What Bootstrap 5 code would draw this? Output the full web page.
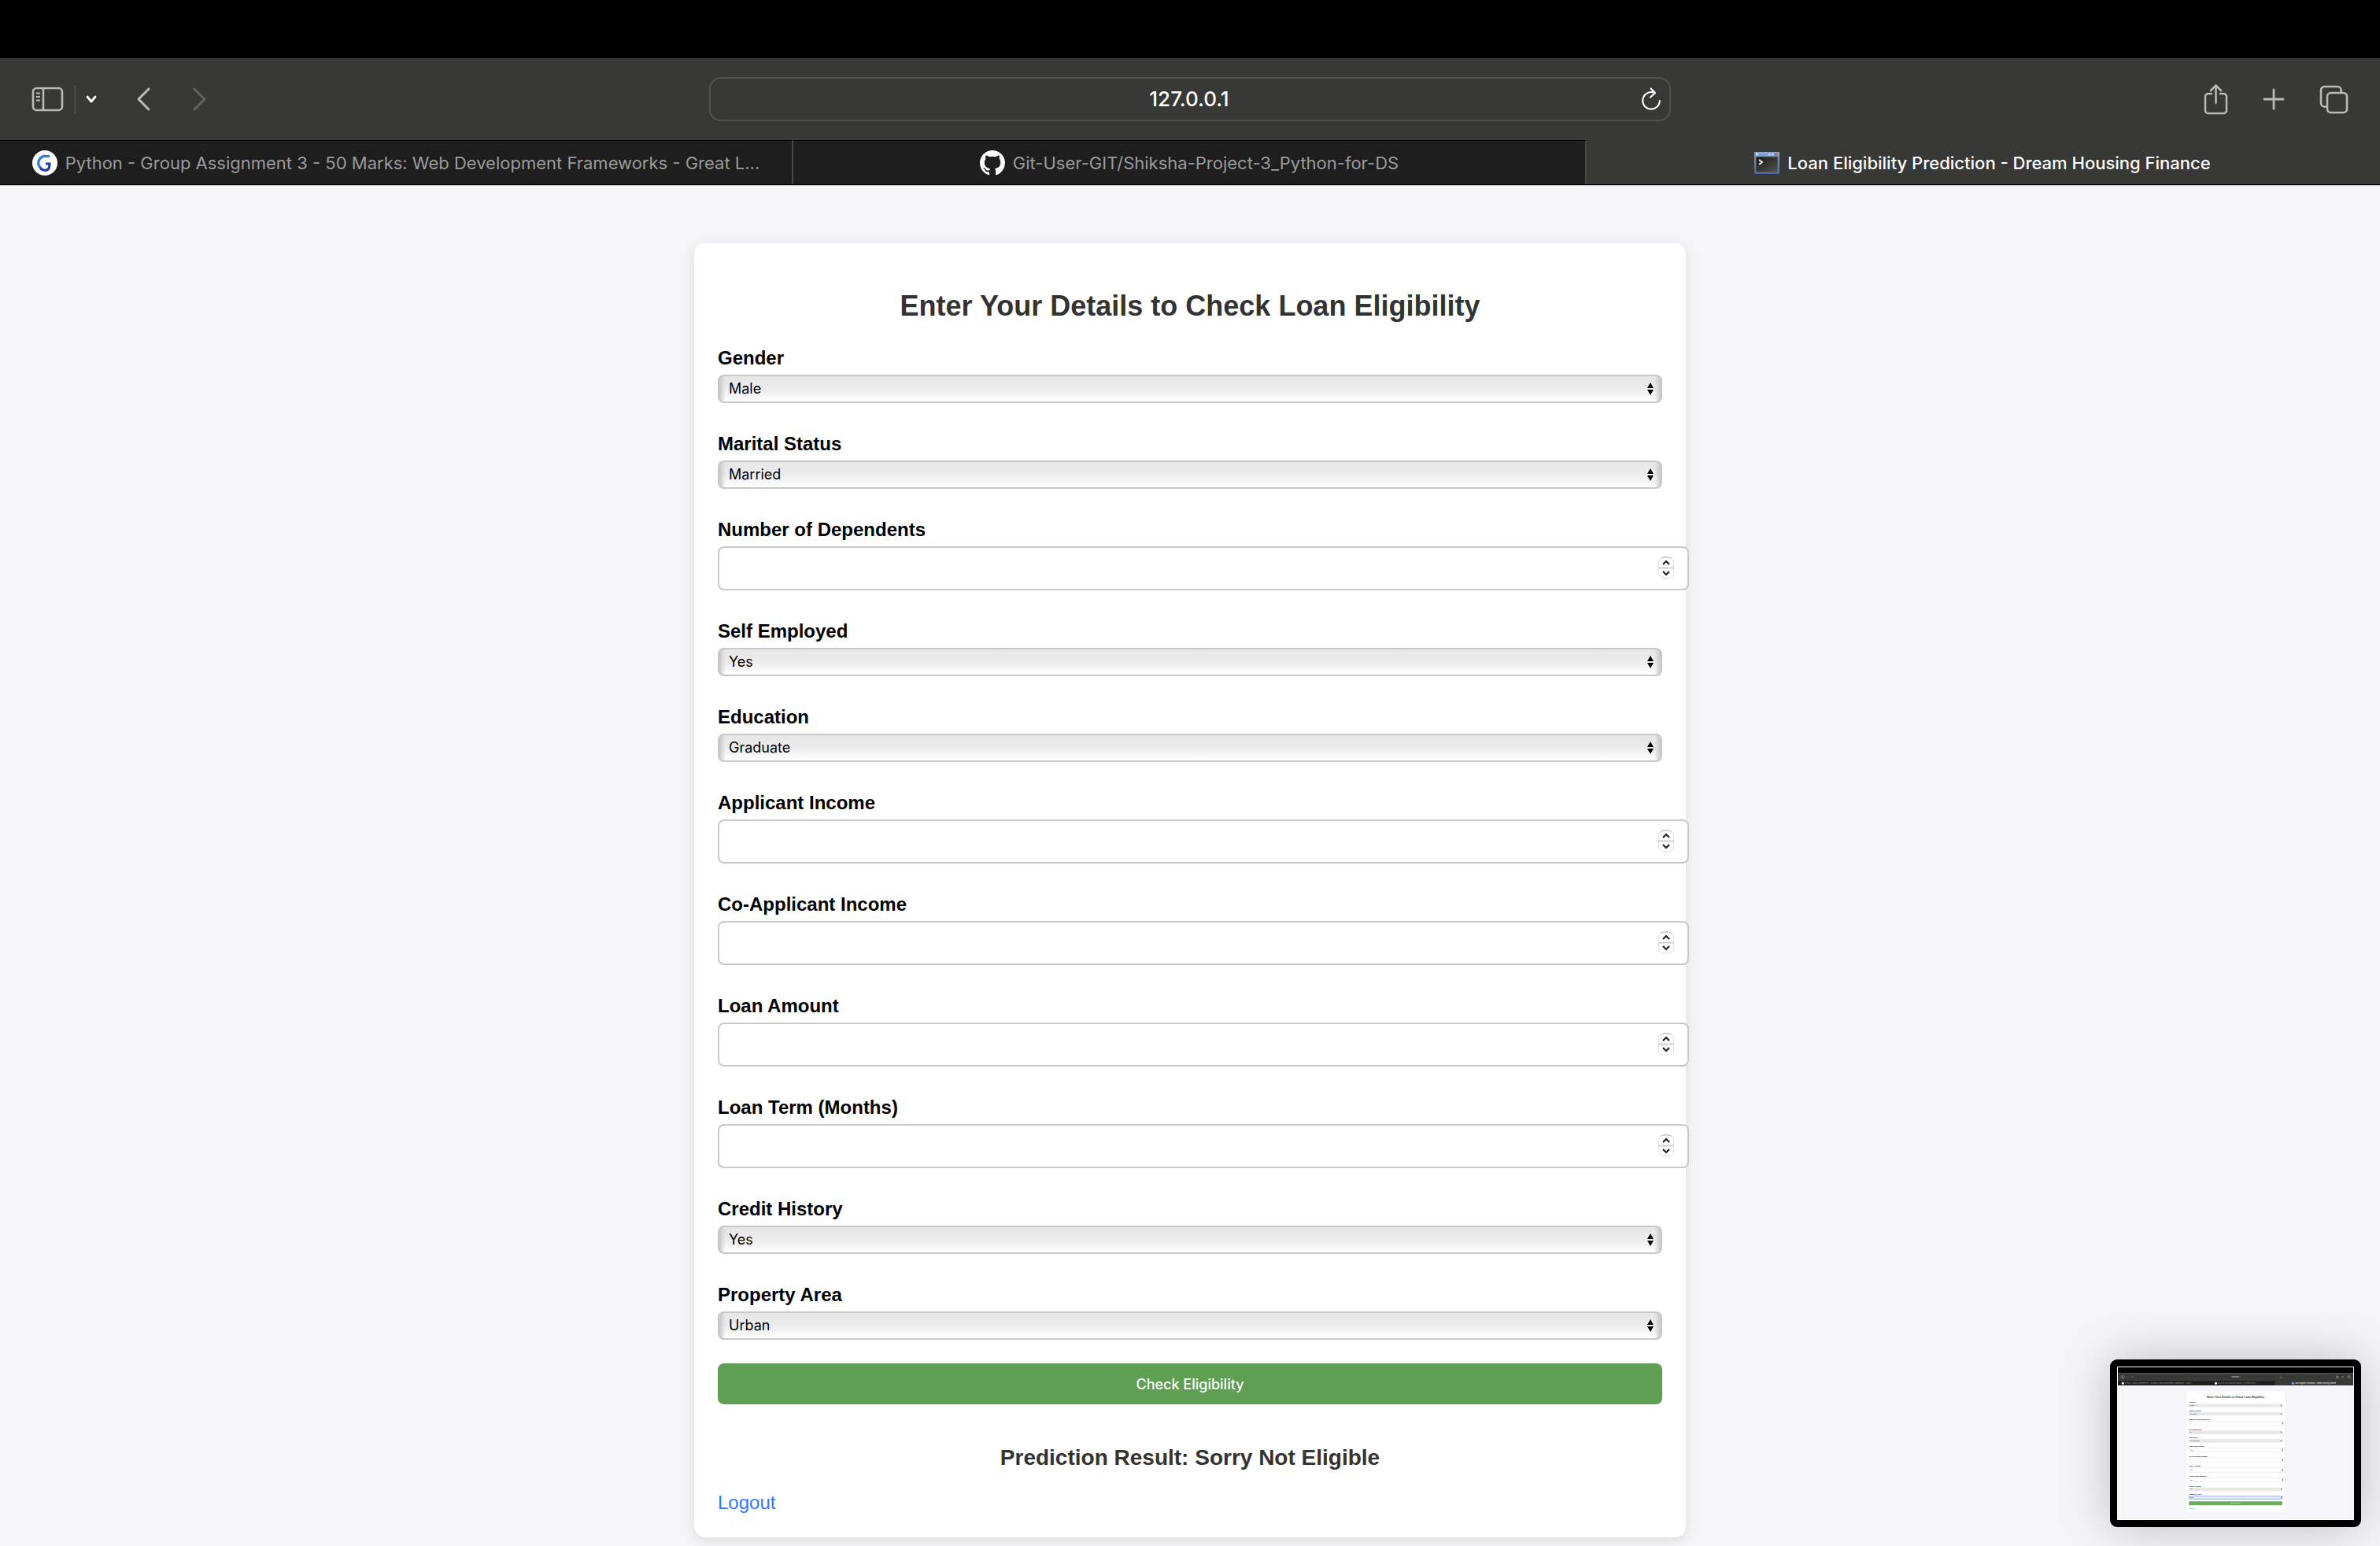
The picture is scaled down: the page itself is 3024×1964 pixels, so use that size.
<!DOCTYPE html>
<html lang="en">
<head>
<meta charset="utf-8">
<meta name="viewport" content="width=device-width, initial-scale=1">
<title>Loan Eligibility Prediction - Dream Housing Finance</title>
<link href="https://cdn.jsdelivr.net/npm/bootstrap@5.3.0/dist/css/bootstrap.min.css" rel="stylesheet">
<style>
  body { background: #f4f4f9; color: #000; font-family: "Liberation Sans", Arial, sans-serif; font-size: 24px; line-height: 28px; }

  /* Browser frame */
  .menu-strip { height: 74px; background: #000; }
  .browser-frame { background: #383836; font-family: Inter, sans-serif; }
  .tool-row { height: 104px; padding: 0 40px; }
  .tool-side { flex: 1 1 0; }
  .tool-btn { padding: 0; border: 0; background: none; color: #b9b9b7; display: flex; }
  .tool-btn:disabled { color: #62625f; }
  .tool-split { width: 2px; height: 36px; background: #4a4a48; margin: 0 13px; }
  .new-tab-btn { margin: 0 44px; }
  .address-box { width: 42%; max-width: 1222px; height: 56px; border: 2px solid #50504e; border-radius: 15px; padding: 0 10px 0 34px; }
  .address-box input { flex: 1; min-width: 0; background: none; border: 0; color: #fff; font-size: 26px; line-height: 32px; font-weight: 500; text-align: center; padding: 0; }
  .tab-row { border-bottom: 1px solid #000; box-shadow: 0 1px 0 #c4c4c6; }
  .page-tab { flex: 1; height: 56px; gap: 10px; border-top: 1px solid #000; border-right: 2px solid #474745; background: #1e1e1e; color: #9b9b9b; font-size: 22px; line-height: 28px; text-decoration: none; white-space: nowrap; overflow: hidden; }
  .page-tab.current { background: #383836; border-color: #383836; color: #fff; font-weight: 500; }
  .page-tab svg { flex: none; }

  /* Form card */
  .form-area { padding: 74px 0 11px; }
  .loan-card { width: 1260px; max-width: 100%; padding: 30px; border-radius: 14px; background: #fff; box-shadow: 0 4px 16px rgba(0, 0, 0, .1); }
  .loan-title { font-size: 36px; line-height: 42px; font-weight: 700; color: #333; margin: 29px 0 23px; }
  .field-block { margin-bottom: 30px; }
  .field-block label { display: block; font-weight: 700; line-height: 28px; padding: 8px 0 7px; }
  .loan-select { display: block; width: 100%; height: 36px; appearance: none; padding: 0 30px 0 12px; border: 2px solid #c8c8c8; border-radius: 8px; color: #000; font: 18px/30px Inter, sans-serif;
    background:
      url("data:image/svg+xml,%3Csvg xmlns='http://www.w3.org/2000/svg' viewBox='0 0 8 16'%3E%3Cpath d='M4 0 8 7H0zM4 16 0 9h8z'/%3E%3C/svg%3E") right 9px center / 8px 16px no-repeat,
      linear-gradient(90deg, #c8c8c8, rgba(220, 220, 220, 0) 8px, rgba(220, 220, 220, 0) calc(100% - 8px), #c8c8c8),
      linear-gradient(#e6e6e6, #ececec 50%, #fff); }
  .loan-number { display: block; width: calc(100% + 34px); height: 56px; appearance: textfield; padding: 0 50px 0 16px; border: 2px solid #c8c8c8; border-radius: 8px; color: #000; font: 18px/30px Inter, sans-serif;
    background: #fff url("data:image/svg+xml,%3Csvg xmlns='http://www.w3.org/2000/svg' viewBox='0 0 22 30' fill='none'%3E%3Crect x='1.5' y='2' width='19' height='27' rx='7' stroke='%23dcdcdc'/%3E%3Cpath d='M4 3.500Q11 0 18 3.500' stroke='%23b8b8b8'/%3E%3Cpath d='M2 15.500h18' stroke='%23cfcfcf' stroke-width='2'/%3E%3Cpath d='M7 11l4-4 4 4M7 20l4 4 4-4' stroke='%23222' stroke-width='2.200'/%3E%3C/svg%3E") right 16px top 10px / 22px 30px no-repeat; }
  .loan-number::-webkit-inner-spin-button { appearance: none; }
  .check-btn { display: block; width: 100%; height: 52px; padding: 2px 0 0; border: 0; border-radius: 8px; background: #5e9f53; color: #fff; font: 500 18px/24px Inter, sans-serif; }
  .result-line { font-size: 28px; line-height: 32px; font-weight: 700; color: #333; margin: 52px 0 27px; }
  .logout-link { display: block; width: max-content; color: #3478f6; text-decoration: none; }

  /* Floating capture preview */
  .capture-preview { right: 24px; bottom: 24px; width: 319px; height: 213px; padding: 1px; border: 8px solid #000; border-radius: 9px; background: #000; box-shadow: 0 0 64px rgba(0, 0, 0, .22); }
  .capture-preview svg { display: block; width: 100%; height: 100%; border: 1px solid #fff; }
</style>
</head>
<body>
<div class="menu-strip"></div>
<header class="browser-frame">
  <div class="tool-row d-flex align-items-center justify-content-between">
    <div class="tool-side d-flex align-items-center">
      <button class="tool-btn" type="button" aria-label="Sidebar"><svg width="41" height="32" viewBox="0 0 41 32" fill="none" stroke="currentColor" stroke-width="2.600"><rect x="2" y="2" width="37" height="28" rx="4.500"/><path d="M15 2v28"/><path d="M6 8.500h5M6 13h5M6 17.500h5" stroke-width="2"/></svg></button>
      <span class="tool-split"></span>
      <button class="tool-btn text-white" type="button" aria-label="Tab groups"><svg width="14" height="12" viewBox="0 0 14 12" fill="none" stroke="currentColor" stroke-width="2.800" stroke-linecap="round" stroke-linejoin="round"><path d="M2 3l5 6 5-6"/></svg></button>
      <button class="tool-btn ms-5" type="button" aria-label="Back"><svg width="22" height="32" viewBox="0 0 22 32" fill="none" stroke="currentColor" stroke-width="3" stroke-linecap="round" stroke-linejoin="round"><path d="M18 3 5 16l13 13"/></svg></button>
      <button class="tool-btn ms-5" type="button" aria-label="Forward" disabled><svg width="22" height="32" viewBox="0 0 22 32" fill="none" stroke="currentColor" stroke-width="3" stroke-linecap="round" stroke-linejoin="round"><path d="M6 3l13 13L6 29"/></svg></button>
    </div>
    <div class="address-box d-flex align-items-center">
      <input type="text" value="127.0.0.1" aria-label="Address">
      <button class="tool-btn text-light" type="button" aria-label="Reload"><svg width="26" height="30" viewBox="0 0 26 30" fill="none" stroke="currentColor" stroke-width="2.200" stroke-linecap="round" stroke-linejoin="round"><path d="M17 6.800A10.800 10.800 0 1 0 23.800 17"/><path d="M12.500 1.500 18 7l-6 5.500"/></svg></button>
    </div>
    <div class="tool-side d-flex align-items-center justify-content-end">
      <button class="tool-btn" type="button" aria-label="Share"><svg width="31" height="40" viewBox="0 0 31 40" fill="none" stroke="currentColor" stroke-width="2.500" stroke-linecap="round" stroke-linejoin="round"><path d="M10 13H5.500A3.500 3.500 0 0 0 2 16.500v18A3.500 3.500 0 0 0 5.500 38h20a3.500 3.500 0 0 0 3.500-3.500v-18a3.500 3.500 0 0 0-3.500-3.500H21"/><path d="M15.500 25V3M9 9l6.500-6.500L22 9"/></svg></button>
      <button class="tool-btn new-tab-btn" type="button" aria-label="New tab"><svg width="28" height="28" viewBox="0 0 28 28" fill="none" stroke="currentColor" stroke-width="2.800" stroke-linecap="round"><path d="M14 2v24M2 14h24"/></svg></button>
      <button class="tool-btn" type="button" aria-label="Tab overview"><svg width="37" height="37" viewBox="0 0 37 37" fill="none" stroke="currentColor" stroke-width="2.600"><rect x="10" y="10" width="25" height="25" rx="4.500"/><path d="M10 27.500H6.500A4.500 4.500 0 0 1 2 23V6.500A4.500 4.500 0 0 1 6.500 2H23a4.500 4.500 0 0 1 4.500 4.500V10"/></svg></button>
    </div>
  </div>
  <nav class="tab-row d-flex" aria-label="Open tabs">
    <a href="#" class="page-tab d-flex align-items-center justify-content-center"><svg width="32" height="32" viewBox="0 0 32 32" fill="none"><circle cx="16" cy="16" r="16" fill="#fff"/><path d="M22 7.500H17A8.500 8.500 0 0 0 9.500 21" stroke="#2f78dc" stroke-width="3.200"/><path d="M9.500 21c2 4 6.500 5.500 10 3.500 2.500-1.500 2.500-4 2.500-7.500h-5" stroke="#1c3fae" stroke-width="3.200"/></svg><span>Python - Group Assignment 3 - 50 Marks: Web Development Frameworks - Great L...</span></a>
    <a href="#" class="page-tab d-flex align-items-center justify-content-center"><svg width="32" height="32" viewBox="0 0 16 16" fill="#fff"><path d="M8 0C3.580 0 0 3.580 0 8c0 3.540 2.290 6.530 5.470 7.590.4.070.55-.17.55-.38 0-.19-.01-.82-.01-1.490-2.010.37-2.530-.49-2.690-.94-.09-.23-.48-.94-.82-1.130-.28-.15-.68-.52-.01-.53.63-.01 1.080.58 1.230.82.72 1.210 1.870.87 2.330.66.07-.52.28-.87.51-1.070-1.780-.2-3.640-.89-3.640-3.950 0-.87.31-1.590.82-2.150-.08-.2-.36-1.020.08-2.120 0 0 .67-.21 2.200.82.64-.18 1.320-.27 2-.27s1.360.09 2 .27c1.530-1.040 2.200-.82 2.200-.82.44 1.100.16 1.920.08 2.120.51.56.82 1.270.82 2.150 0 3.070-1.870 3.750-3.650 3.950.29.25.54.73.54 1.480 0 1.070-.01 1.930-.01 2.200 0 .21.15.46.55.38A8.010 8.010 0 0 0 16 8c0-4.420-3.580-8-8-8z"/></svg><span>Git-User-GIT/Shiksha-Project-3_Python-for-DS</span></a>
    <a href="#" class="page-tab current d-flex align-items-center justify-content-center" aria-current="page"><svg width="32" height="28" viewBox="0 0 32 28"><defs><linearGradient id="winBlue" x2="0" y2="1"><stop stop-color="#86a9e2"/><stop offset="1" stop-color="#4467a8"/></linearGradient><linearGradient id="winDark" x2="1" y2="1"><stop stop-color="#161616"/><stop offset="1" stop-color="#555"/></linearGradient></defs><rect width="32" height="28" rx="1" fill="url(#winBlue)"/><path d="M2 1.500h3v3H2zM18 2h2.500v2.500H18zM22 2h2.500v2.500H22z" fill="#c8d8f2"/><path d="M26 1.500h3.500v3H26z" fill="#e0543c"/><rect x="2" y="6" width="28" height="20" fill="url(#winDark)" stroke="#6f6f70"/><path d="M6 10l4 3-4 3" fill="none" stroke="#eee" stroke-width="2"/></svg><span>Loan Eligibility Prediction - Dream Housing Finance</span></a>
  </nav>
</header>

<main class="form-area">
  <div class="loan-card mx-auto">
    <h2 class="loan-title text-center">Enter Your Details to Check Loan Eligibility</h2>
    <form>
      <div class="field-block"><label for="gender">Gender</label><select class="loan-select" id="gender"><option>Male</option><option>Female</option></select></div>
      <div class="field-block"><label for="marital">Marital Status</label><select class="loan-select" id="marital"><option>Married</option><option>Not Married</option></select></div>
      <div class="field-block"><label for="dependents">Number of Dependents</label><input class="loan-number" type="number" id="dependents"></div>
      <div class="field-block"><label for="employed">Self Employed</label><select class="loan-select" id="employed"><option>Yes</option><option>No</option></select></div>
      <div class="field-block"><label for="education">Education</label><select class="loan-select" id="education"><option>Graduate</option><option>Under graduate</option></select></div>
      <div class="field-block"><label for="income">Applicant Income</label><input class="loan-number" type="number" id="income"></div>
      <div class="field-block"><label for="coincome">Co-Applicant Income</label><input class="loan-number" type="number" id="coincome"></div>
      <div class="field-block"><label for="amount">Loan Amount</label><input class="loan-number" type="number" id="amount"></div>
      <div class="field-block"><label for="term">Loan Term (Months)</label><input class="loan-number" type="number" id="term"></div>
      <div class="field-block"><label for="credit">Credit History</label><select class="loan-select" id="credit"><option>Yes</option><option>No</option></select></div>
      <div class="field-block"><label for="area">Property Area</label><select class="loan-select" id="area"><option>Urban</option><option>Rural</option></select></div>
      <button class="check-btn" type="button">Check Eligibility</button>
    </form>
    <h3 class="result-line text-center">Prediction Result: Sorry Not Eligible</h3>
    <a class="logout-link" href="#">Logout</a>
  </div>
</main>

<aside class="capture-preview position-fixed" aria-label="Capture preview">
  <svg viewBox="0 0 3024 1964" preserveAspectRatio="none" font-family="Liberation Sans, sans-serif" font-size="24">
    <rect width="3024" height="1964" fill="#f4f4f9"/>
    <rect width="3024" height="74" fill="#000"/>
    <rect y="74" width="3024" height="160" fill="#383836"/>
    <rect y="178" width="2016" height="56" fill="#1e1e1e"/>
    <rect x="901" y="98" width="1222" height="56" rx="15" fill="none" stroke="#50504e" stroke-width="3"/>
    <g fill="none" stroke="#b9b9b7" stroke-width="4"><rect x="42" y="110" width="38" height="30" rx="4"/><path d="M56 110v30M110 122l6 7 6-7M190 112l-13 13 13 13M2108 127a11 11 0 1 1-11-11M2805 118h28v24h-28zM2819 132v-26M2878 125h26M2891 112v26M2960 117h25v25h-25zM2952 134v-26h26"/></g>
    <circle cx="64" cy="206" r="16" fill="#fff"/><circle cx="1259" cy="206" r="16" fill="#fff"/><rect x="2232" y="192" width="32" height="28" fill="#6f91cc"/>
    <g font-family="Inter, sans-serif" font-size="22" fill="#9b9b9b"><text x="91" y="214">Python - Group Assignment 3 - 50 Marks: Web Development Frameworks - Great L...</text><text x="1285" y="214">Git-User-GIT/Shiksha-Project-3_Python-for-DS</text><text x="2274" y="214" fill="#fff">Loan Eligibility Prediction - Dream Housing Finance</text><text x="1512" y="135" font-size="26" fill="#fff" text-anchor="middle">127.0.0.1</text></g>
    <rect x="882" y="309" width="1260" height="1560" rx="14" fill="#fff"/>
    <text x="1512" y="401" font-size="36" font-weight="700" fill="#333" text-anchor="middle">Enter Your Details to Check Loan Eligibility</text>
    <g font-weight="700"><text x="912" y="463">Gender</text><text x="912" y="572">Marital Status</text><text x="912" y="681">Number of Dependents</text><text x="912" y="810">Self Employed</text><text x="912" y="919">Education</text><text x="912" y="1028">Applicant Income</text><text x="912" y="1157">Co-Applicant Income</text><text x="912" y="1286">Loan Amount</text><text x="912" y="1415">Loan Term (Months)</text><text x="912" y="1544">Credit History</text><text x="912" y="1653">Property Area</text></g>
    <g fill="#e8e8e8" stroke="#c8c8c8" stroke-width="2"><rect x="912" y="476" width="1200" height="36"/><rect x="912" y="585" width="1200" height="36"/><rect x="912" y="823" width="1200" height="36"/><rect x="912" y="932" width="1200" height="36"/><rect x="912" y="1557" width="1200" height="36"/></g>
    <rect x="912" y="1666" width="1200" height="36" rx="8" fill="#eee" stroke="#7c9df0" stroke-width="8"/>
    <g fill="#fff" stroke="#c8c8c8" stroke-width="3"><rect x="912" y="694" width="1234" height="56"/><rect x="912" y="1041" width="1234" height="56"/><rect x="912" y="1170" width="1234" height="56"/><rect x="912" y="1299" width="1234" height="56"/><rect x="912" y="1428" width="1234" height="56"/></g>
    <path d="M2098 486v16M2098 595v16M2098 833v16M2098 942v16M2098 1567v16M2098 1676v16M2117 708v28M2117 1055v28M2117 1184v28M2117 1313v28M2117 1442v28" stroke="#333" stroke-width="8"/>
    <g font-size="18"><text x="926" y="500">Female</text><text x="926" y="609">Not Married</text><text x="930" y="729">0</text><text x="926" y="847">No</text><text x="926" y="956">Under graduate</text><text x="930" y="1076">4800</text><text x="930" y="1205">0</text><text x="930" y="1334">150</text><text x="930" y="1463">360</text><text x="926" y="1581">Yes</text><text x="926" y="1690">Rural</text></g>
    <rect x="912" y="1732" width="1200" height="52" rx="8" fill="#67ad5b"/>
    <text x="1512" y="1764" font-size="18" fill="#fff" text-anchor="middle">Check Eligibility</text>
    <text x="912" y="1830" fill="#3478f6">Logout</text>
  </svg>
</aside>
<script src="https://cdn.jsdelivr.net/npm/bootstrap@5.3.0/dist/js/bootstrap.bundle.min.js"></script>
</body>
</html>
